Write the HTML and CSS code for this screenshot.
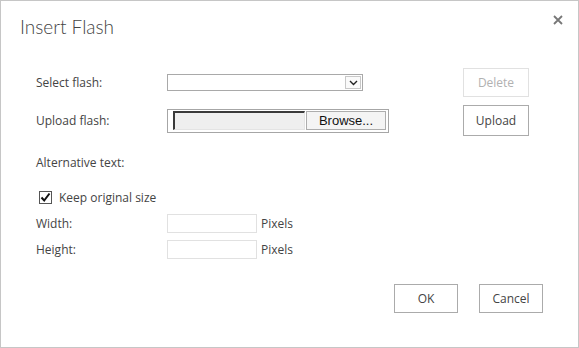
FILE: index.html
```html
<!DOCTYPE html>
<html>
<head>
<meta charset="utf-8">
<link rel="stylesheet" href="styles.css">
</head>
<body>
<div class="dialog">
  <div class="header">
    <div class="title">Insert Flash</div>
    <div class="close">
      <svg width="10" height="10" viewBox="0 0 10 10"><path d="M1 1L9 9M9 1L1 9" stroke="#777" stroke-width="1.8"/></svg>
    </div>
  </div>
  <div class="form">
    <div class="label">Select flash:</div>
    <div class="ctrl">
      <div class="select"><span class="select-val"></span><span class="arrow"><svg width="9" height="6" viewBox="0 0 9 6"><path d="M1 1L4.5 4.5L8 1" fill="none" stroke="#222" stroke-width="1.4"/></svg></span></div>
    </div>
    <div class="side"><div class="btn disabled tall29">Delete</div></div>

    <div class="label">Upload flash:</div>
    <div class="ctrl">
      <div class="upload"><span class="file-field"></span><span class="browse">Browse...</span></div>
    </div>
    <div class="side"><div class="btn tall31">Upload</div></div>

    <div class="label">Alternative text:</div>
    <div class="ctrl"></div>
    <div class="side"></div>

    <div class="check-row">
      <span class="checkbox"><svg width="11" height="11" viewBox="0 0 11 11"><path d="M1.5 5.5L4.2 8.5L9.5 1.5" fill="none" stroke="#111" stroke-width="2"/></svg></span>
      <span class="label">Keep original size</span>
    </div>

    <div class="label top">Width:</div>
    <div class="ctrl top"><div class="num"></div><span class="unit">Pixels</span></div>
    <div class="side"></div>

    <div class="label top">Height:</div>
    <div class="ctrl top"><div class="num"></div><span class="unit">Pixels</span></div>
    <div class="side"></div>
  </div>
  <div class="footer">
    <div class="btn">OK</div>
    <div class="btn">Cancel</div>
  </div>
</div>
</body>
</html>
```

FILE: styles.css
```css
html, body { margin: 0; padding: 0; background: #fff; }
body { font-family: "Open Sans", "Noto Sans", sans-serif; color: #444; }
.dialog {
  width: 579px; height: 348px; box-sizing: border-box;
  border: 1px solid #c6c6c6; background: #fff;
}
.header {
  display: flex; justify-content: space-between; align-items: flex-start;
  padding: 11px 15px 0 19px; height: 56px; box-sizing: border-box;
}
.title { font-family: Lato, "Open Sans", sans-serif; font-size: 19px; line-height: 29px; color: #444; font-weight: 300; }
.close { width: 10px; height: 10px; margin-top: 3px; display: flex; }
.form {
  margin-top: 11px;
  padding-left: 35px;
  display: grid;
  grid-template-columns: 131px 296px 66px;
  grid-template-rows: 29px 47px 36px 34px 26px 26px;
  align-items: center;
}
.label { font-size: 12px; line-height: 19px; color: #444; white-space: nowrap; }
.top { align-self: start; }
.ctrl { display: flex; align-items: center; }
.select {
  width: 196px; height: 17px; box-sizing: border-box;
  border: 1px solid #a9a9a9; display: flex; justify-content: flex-end; align-items: center;
  padding-right: 1px;
}
.arrow {
  width: 16px; height: 13px; box-sizing: border-box;
  border: 1px solid #c8c8c8; background: #fafafa;
  display: flex; align-items: center; justify-content: center;
}
.upload {
  width: 222px; height: 24px; box-sizing: border-box;
  border: 1px solid #a6a6a6; display: flex; align-items: center;
  padding-left: 5px; gap: 1px;
}
.file-field {
  width: 132px; height: 19px; box-sizing: border-box;
  background: #efefef; border-top: 2px solid #3a3a3a; border-left: 2px solid #3a3a3a;
  border-right: 1px solid #e4e4e4; border-bottom: 1px solid #e4e4e4;
}
.browse {
  width: 80px; height: 19px; box-sizing: border-box;
  background: #f4f4f4; border: 1px solid #adadad;
  font-family: "Liberation Sans", Arial, sans-serif; font-size: 13px; color: #111;
  display: flex; align-items: center; justify-content: center; line-height: 17px;
}
.side { display: flex; }
.btn {
  width: 64px; height: 29px; box-sizing: border-box;
  border: 1px solid #ababab; background: #fff;
  font-size: 12px; color: #444;
  display: flex; align-items: center; justify-content: center;
}
.side .btn { width: 66px; }
.btn.disabled { border-color: #e1e1e1; color: #b1b1b1; }
.tall31 { height: 31px; }
.check-row {
  grid-column: 1 / 4; display: flex; align-items: center; gap: 7px; padding-left: 3px;
}
.checkbox {
  width: 13px; height: 13px; box-sizing: border-box;
  border: 1px solid #555; display: flex; align-items: center; justify-content: center;
  background: #fff;
}
.num {
  width: 90px; height: 19px; box-sizing: border-box; border: 1px solid #e1e1e1;
}
.unit { font-size: 12px; line-height: 19px; margin-left: 4px; color: #444; }
.footer {
  display: flex; justify-content: flex-end; gap: 21px;
  margin-top: 18px; padding-right: 35px;
}
```
